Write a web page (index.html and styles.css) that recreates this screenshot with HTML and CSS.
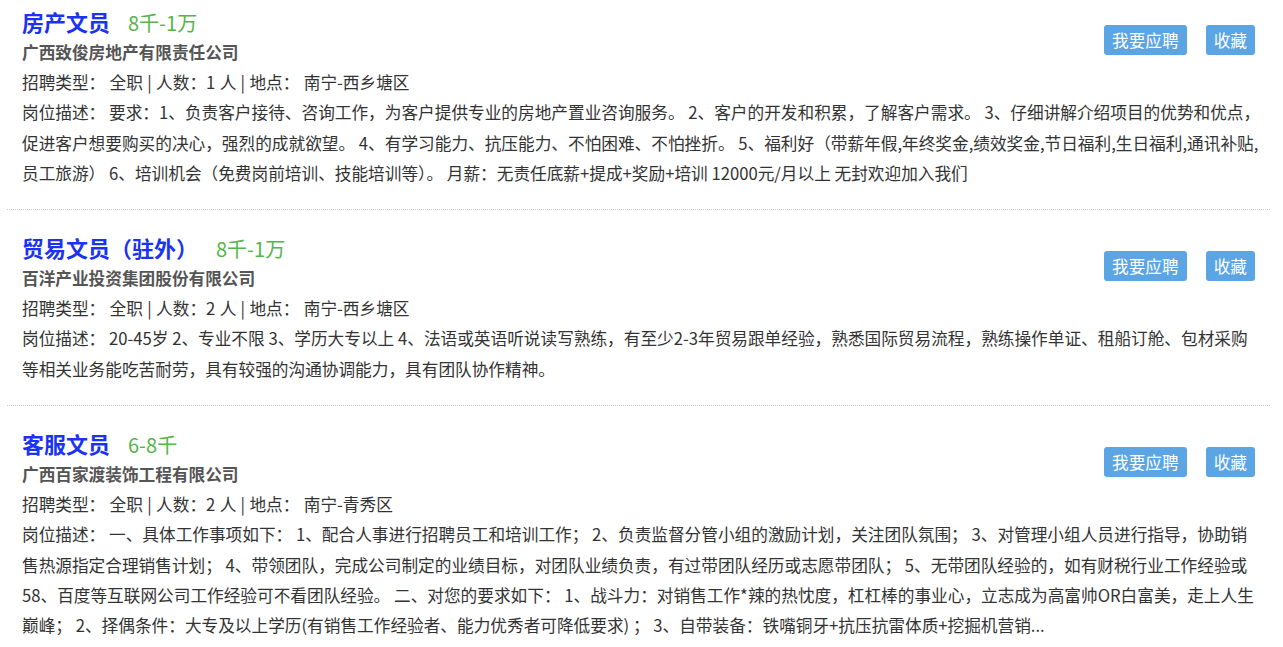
FILE: index.html
```html
<!DOCTYPE html>
<html lang="zh-CN">
<head>
<meta charset="utf-8">
<title>招聘信息</title>
<link rel="stylesheet" href="styles.css">
</head>
<body>
<div class="job-list">
  <div class="job">
    <div class="actions">
      <a class="btn">我要应聘</a>
      <a class="btn">收藏</a>
    </div>
    <div class="title-row"><span class="title">房产文员</span><span class="salary">8千-1万</span></div>
    <div class="company">广西致俊房地产有限责任公司</div>
    <div class="meta">招聘类型： 全职 | 人数：1 人 | 地点： 南宁-西乡塘区</div>
    <div class="desc">岗位描述： 要求：1、负责客户接待、咨询工作，为客户提供专业的房地产置业咨询服务。 2、客户的开发和积累，了解客户需求。 3、仔细讲解介绍项目的优势和优点，促进客户想要购买的决心，强烈的成就欲望。 4、有学习能力、抗压能力、不怕困难、不怕挫折。 5、福利好（带薪年假,年终奖金,绩效奖金,节日福利,生日福利,通讯补贴,员工旅游） 6、培训机会（免费岗前培训、技能培训等）。 月薪：无责任底薪+提成+奖励+培训 12000元/月以上 无封欢迎加入我们</div>
  </div>
  <div class="job">
    <div class="actions">
      <a class="btn">我要应聘</a>
      <a class="btn">收藏</a>
    </div>
    <div class="title-row"><span class="title">贸易文员（驻外）</span><span class="salary">8千-1万</span></div>
    <div class="company">百洋产业投资集团股份有限公司</div>
    <div class="meta">招聘类型： 全职 | 人数：2 人 | 地点： 南宁-西乡塘区</div>
    <div class="desc">岗位描述： 20-45岁 2、专业不限 3、学历大专以上 4、法语或英语听说读写熟练，有至少2-3年贸易跟单经验，熟悉国际贸易流程，熟练操作单证、租船订舱、包材采购等相关业务能吃苦耐劳，具有较强的沟通协调能力，具有团队协作精神。</div>
  </div>
  <div class="job">
    <div class="actions">
      <a class="btn">我要应聘</a>
      <a class="btn">收藏</a>
    </div>
    <div class="title-row"><span class="title">客服文员</span><span class="salary">6-8千</span></div>
    <div class="company">广西百家渡装饰工程有限公司</div>
    <div class="meta">招聘类型： 全职 | 人数：2 人 | 地点： 南宁-青秀区</div>
    <div class="desc">岗位描述： 一、具体工作事项如下： 1、配合人事进行招聘员工和培训工作； 2、负责监督分管小组的激励计划，关注团队氛围； 3、对管理小组人员进行指导，协助销售热源指定合理销售计划； 4、带领团队，完成公司制定的业绩目标，对团队业绩负责，有过带团队经历或志愿带团队； 5、无带团队经验的，如有财税行业工作经验或58、百度等互联网公司工作经验可不看团队经验。 二、对您的要求如下： 1、战斗力：对销售工作*辣的热忱度，杠杠棒的事业心，立志成为高富帅OR白富美，走上人生巅峰； 2、择偶条件：大专及以上学历(有销售工作经验者、能力优秀者可降低要求) ； 3、自带装备：铁嘴铜牙+抗压抗雷体质+挖掘机营销...</div>
  </div>
</div>
</body>
</html>
```
FILE: styles.css
```css
html, body {
  margin: 0;
  padding: 0;
  background: #fff;
}
body {
  font-family: "Noto Sans CJK SC", "Noto Sans", sans-serif;
  font-size: 16.67px;
  color: #333;
  overflow: hidden;
}
.job-list {
  margin: -16px 13px 0 7px;
}
.job {
  padding: 21px 8px 21px 15px;
  border-bottom: 1px dotted #c8c8c8;
}
.actions {
  float: right;
  margin: 20px 7px 0 0;
  display: flex;
  gap: 19px;
}
.btn {
  display: block;
  height: 30px;
  line-height: 30px;
  padding: 0 8px;
  background: #5ca5e5;
  color: #fff;
  border-radius: 3px;
  cursor: pointer;
}
.title-row {
  height: 32px;
  line-height: 32px;
}
.title {
  font-size: 22px;
  font-weight: bold;
  color: #1a33f2;
}
.salary {
  margin-left: 18px;
  font-size: 20px;
  color: #55b548;
}
.company {
  line-height: 30px;
  font-weight: bold;
  color: #555;
}
.meta {
  line-height: 30.3px;
  word-spacing: 0.6px;
}
.desc {
  line-height: 30.3px;
}
```
